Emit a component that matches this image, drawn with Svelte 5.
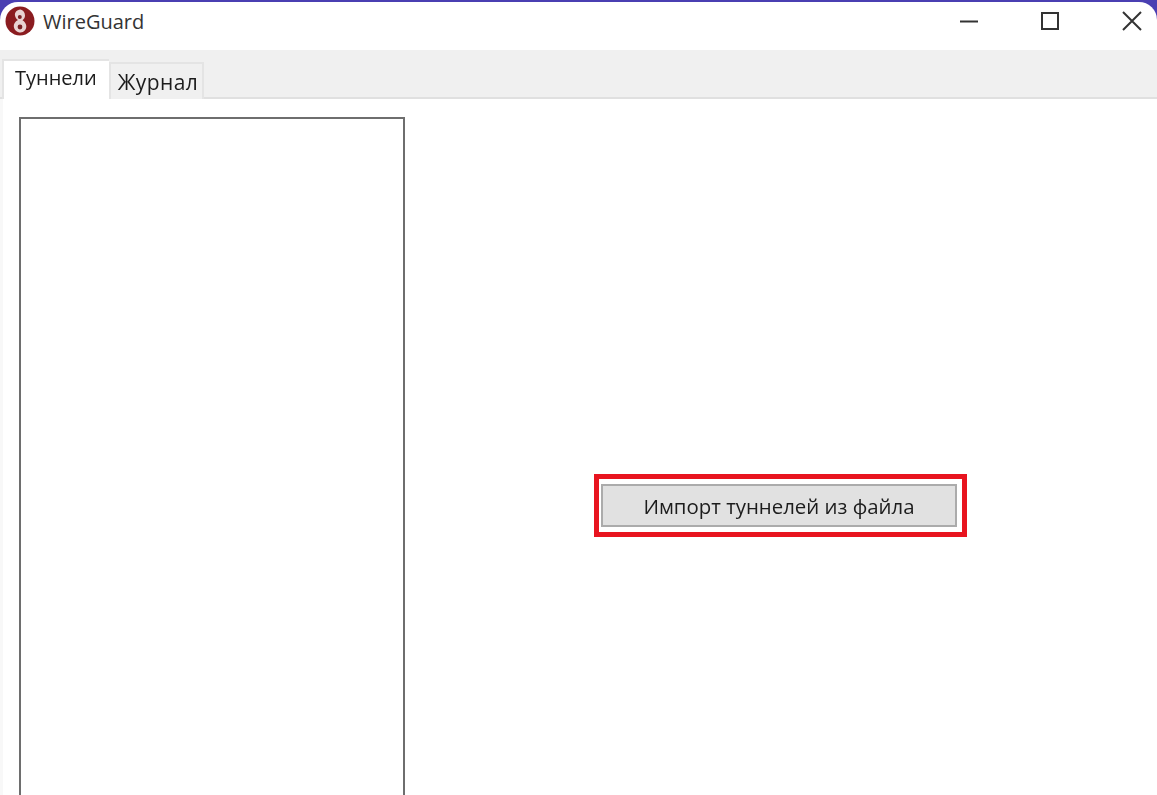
<script>
    let tabs = ["Туннели", "Журнал"];
    let active = 0;
</script>

<div class="page">
    <div class="window">
        <header class="titlebar">
            <div class="title">
                <svg class="logo" viewBox="0 0 30 30" width="30" height="30">
                    <circle cx="15" cy="15" r="14.5" fill="#8a1c20" />
                    <path d="M15.5 3.5 C11.5 4 9.5 6.5 10 9.5 C10.4 11.5 11.5 13 13 14 C10 15.5 8.5 18 8.8 20.5 C9.2 24 12 26.5 15.5 26.5 C19 26.5 21.5 23.5 21.3 20 C21.1 17.5 19.5 15.5 17.5 14.2 C19 13.2 20 11.5 20 9.5 C20 6 18 4 15.5 3.5 Z" fill="#e9d3d3" />
                    <circle cx="14.8" cy="11" r="2" fill="#7a2226" />
                    <circle cx="15" cy="21" r="2.4" fill="#7a2226" />
                </svg>
                <span>WireGuard</span>
            </div>
            <div class="controls">
                <svg width="18" height="18" viewBox="0 0 18 18"><path d="M0 9.5H18" stroke="#333" stroke-width="2" /></svg>
                <svg width="20" height="20" viewBox="0 0 20 20"><rect x="2" y="2" width="16" height="16" fill="none" stroke="#333" stroke-width="2" /></svg>
                <svg width="20" height="20" viewBox="0 0 20 20"><path d="M1 1L19 19M19 1L1 19" stroke="#333" stroke-width="2" /></svg>
            </div>
        </header>

        <nav class="tabs">
            {#each tabs as tab, i}
                <div class="tab" class:active={i === active}>{tab}</div>
            {/each}
        </nav>

        <main class="content">
            <div class="list"></div>
            <div class="pane">
                <div class="highlight">
                    <button class="import">Импорт туннелей из файла</button>
                </div>
            </div>
        </main>
    </div>
</div>

<style>
    :global(body) {
        margin: 0;
        overflow: hidden;
        background: #4a3fb2;
    }

    .page {
        height: 795px;
        padding-top: 2px;
        box-sizing: border-box;
        overflow: hidden;
        font-family: "Open Sans", "Noto Sans", sans-serif;
        color: #222;
    }

    .window {
        height: 913px;
        display: flex;
        flex-direction: column;
        background: #fff;
        border-radius: 18px 18px 0 0;
        filter: blur(0.45px);
    }

    .titlebar {
        flex: 0 0 48px;
        box-sizing: border-box;
        display: flex;
        align-items: center;
        justify-content: space-between;
        padding: 0 15px 10px 5px;
    }

    .title {
        display: flex;
        align-items: center;
        gap: 8px;
        font-size: 20px;
        color: #333;
    }

    .logo {
        display: block;
    }

    .controls {
        display: flex;
        align-items: center;
        gap: 62px;
    }

    .controls svg {
        display: block;
    }

    .tabs {
        flex: 0 0 49px;
        box-sizing: border-box;
        display: flex;
        align-items: flex-end;
        padding-left: 2px;
        background: #f0f0f0;
        border-bottom: 2px solid #e0e0e0;
    }

    .tab {
        box-sizing: border-box;
        height: 37px;
        margin-bottom: -2px;
        padding: 0 4px 0 7px;
        display: flex;
        align-items: center;
        font-size: 21px;
        letter-spacing: 0.4px;
        color: #1c1c1c;
        background: #f0f0f0;
        border: 2px solid #e4e4e4;
        border-bottom: none;
    }

    .tab.active {
        height: 40px;
        padding: 0 12px 6px 11px;
        font-size: 20px;
        letter-spacing: 0;
        background: #fff;
        border-right: none;
    }

    .content {
        flex: 1;
        display: flex;
        padding: 18px 0 0 16px;
        border-left: 3px solid #f8f8f8;
    }

    .list {
        box-sizing: border-box;
        width: 386px;
        border: 2px solid #6e6e6e;
        background: #fff;
    }

    .pane {
        flex: 1;
        display: flex;
        align-items: center;
        justify-content: center;
        padding-right: 1px;
        padding-bottom: 21px;
    }

    .highlight {
        padding: 5px 5px 5px 2px;
        border: 5px solid #e8141f;
        background: #fff;
    }

    .import {
        display: block;
        box-sizing: border-box;
        width: 356px;
        height: 43px;
        padding: 0;
        font-family: inherit;
        font-size: 20.4px;
        color: #1c1c1c;
        background: #e1e1e1;
        border: 2px solid #ababab;
    }
</style>
